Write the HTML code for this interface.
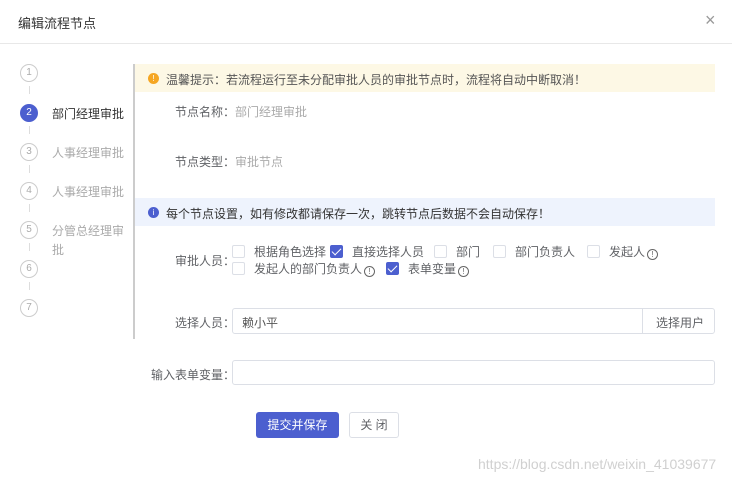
<!DOCTYPE html><html><head><meta charset="utf-8"><style>
*{box-sizing:border-box;margin:0;padding:0}
body{width:732px;height:482px;background:#fff;font-family:"Liberation Sans","Noto Sans CJK SC",sans-serif;font-size:12px;color:#606266;position:relative;overflow:hidden}
.a{position:absolute;white-space:nowrap}
.c{position:absolute;width:18px;height:18px;border:1px solid #ccc;border-radius:50%;font-size:10px;color:#aaa;text-align:center;line-height:16px;left:20px}
.ln{position:absolute;left:29px;width:1px;height:8px;background:#ddd}
.cb{position:absolute;width:13px;height:13px;border:1px solid #dcdfe6;border-radius:2px;background:#fff}
.cb.on{background:#4c5fcf;border-color:#4c5fcf}
.cb.on:after{content:"";position:absolute;left:3px;top:0px;width:4px;height:8px;border:solid #fff;border-width:0 1.5px 1.5px 0;transform:rotate(45deg)}
.i{display:inline-block;width:11px;height:11px;border:1px solid #666;border-radius:50%;font-size:8px;line-height:9px;text-align:center;vertical-align:-1px;margin-left:2px;color:#666}
</style></head><body>
<div class="a" style="left:18px;top:13px;font-size:13px;color:#333">编辑流程节点</div>
<div class="a" style="left:705px;top:10px;font-size:18px;color:#999">×</div>
<div class="a" style="left:0;top:43px;width:732px;height:1px;background:#e8e8e8"></div>

<div class="c" style="top:64px">1</div><div class="ln" style="top:86px"></div>
<div class="c" style="top:104px;background:#4c5fcf;border-color:#4c5fcf;color:#fff">2</div><div class="ln" style="top:126px"></div>
<div class="c" style="top:143px">3</div><div class="ln" style="top:165px"></div>
<div class="c" style="top:182px">4</div><div class="ln" style="top:204px"></div>
<div class="c" style="top:221px">5</div><div class="ln" style="top:243px"></div>
<div class="c" style="top:260px">6</div><div class="ln" style="top:282px"></div>
<div class="c" style="top:299px">7</div>
<div class="a" style="left:52px;top:105px;color:#333">部门经理审批</div>
<div class="a" style="left:52px;top:144px;color:#aaa">人事经理审批</div>
<div class="a" style="left:52px;top:183px;color:#aaa">人事经理审批</div>
<div class="a" style="left:52px;top:222px;color:#aaa;line-height:19px">分管总经理审<br>批</div>
<div class="a" style="left:133px;top:64px;width:2px;height:275px;background:#ccc"></div>

<div class="a" style="left:135px;top:64px;width:580px;height:28px;background:#fdf8e5"></div>
<div class="a" style="left:148px;top:73px;width:11px;height:11px;border-radius:50%;background:#f5a623;color:#fff;font-size:8px;text-align:center;line-height:11px">!</div>
<div class="a" style="left:166px;top:71px;color:#555">温馨提示：若流程运行至未分配审批人员的审批节点时，流程将自动中断取消！</div>
<div class="a" style="left:175px;top:103px">节点名称：<span style="color:#aaa">部门经理审批</span></div>
<div class="a" style="left:175px;top:153px">节点类型：<span style="color:#aaa">审批节点</span></div>

<div class="a" style="left:135px;top:198px;width:580px;height:28px;background:#eef3fd"></div>
<div class="a" style="left:148px;top:207px;width:11px;height:11px;border-radius:50%;background:#4c5fcf;color:#fff;font-size:8px;text-align:center;line-height:11px">i</div>
<div class="a" style="left:166px;top:205px;color:#333">每个节点设置，如有修改都请保存一次，跳转节点后数据不会自动保存！</div>

<div class="a" style="left:175px;top:252px">审批人员：</div>
<div class="cb" style="left:232px;top:245px"></div><div class="a" style="left:254px;top:243px">根据角色选择</div>
<div class="cb on" style="left:330px;top:245px"></div><div class="a" style="left:352px;top:243px">直接选择人员</div>
<div class="cb" style="left:434px;top:245px"></div><div class="a" style="left:456px;top:243px">部门</div>
<div class="cb" style="left:493px;top:245px"></div><div class="a" style="left:515px;top:243px">部门负责人</div>
<div class="cb" style="left:587px;top:245px"></div><div class="a" style="left:609px;top:243px">发起人<span class="i">!</span></div>
<div class="cb" style="left:232px;top:262px"></div><div class="a" style="left:254px;top:260px">发起人的部门负责人<span class="i">!</span></div>
<div class="cb on" style="left:386px;top:262px"></div><div class="a" style="left:408px;top:260px">表单变量<span class="i">!</span></div>

<div class="a" style="left:175px;top:314px">选择人员：</div>
<div class="a" style="left:232px;top:308px;width:483px;height:26px;border:1px solid #dcdfe6;border-radius:3px"></div>
<div class="a" style="left:242px;top:314px;color:#555">赖小平</div>
<div class="a" style="left:642px;top:309px;width:1px;height:24px;background:#dcdfe6"></div>
<div class="a" style="left:656px;top:314px">选择用户</div>

<div class="a" style="left:151px;top:366px">输入表单变量：</div>
<div class="a" style="left:232px;top:360px;width:483px;height:25px;border:1px solid #dcdfe6;border-radius:3px"></div>

<div class="a" style="left:256px;top:412px;width:83px;height:26px;background:#4c5fcf;border-radius:3px;color:#fff;text-align:center;line-height:26px">提交并保存</div>
<div class="a" style="left:349px;top:412px;width:50px;height:26px;border:1px solid #dcdfe6;border-radius:3px;text-align:center;line-height:24px">关 闭</div>
<div class="a" style="left:478px;top:456px;font-size:14px;color:#d0d0d0">https://blog.csdn.net/weixin_41039677</div>
</body></html>
